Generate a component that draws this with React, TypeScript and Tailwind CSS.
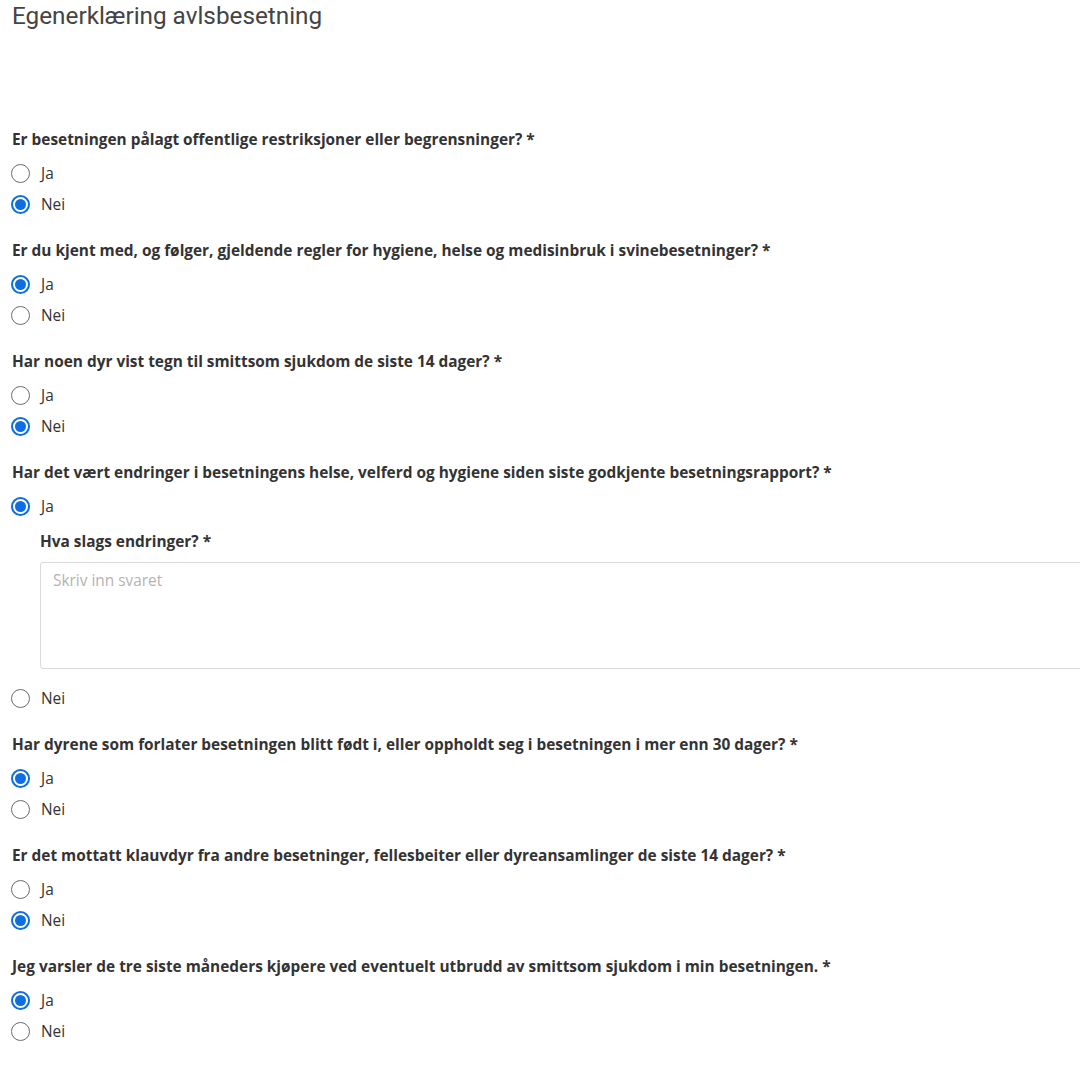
import React from "react";

type Q = { label: string; value: "Ja" | "Nei"; sub?: boolean };

const questions: Q[] = [
  { label: "Er besetningen pålagt offentlige restriksjoner eller begrensninger? *", value: "Nei" },
  { label: "Er du kjent med, og følger, gjeldende regler for hygiene, helse og medisinbruk i svinebesetninger? *", value: "Ja" },
  { label: "Har noen dyr vist tegn til smittsom sjukdom de siste 14 dager? *", value: "Nei" },
  { label: "Har det vært endringer i besetningens helse, velferd og hygiene siden siste godkjente besetningsrapport? *", value: "Ja", sub: true },
  { label: "Har dyrene som forlater besetningen blitt født i, eller oppholdt seg i besetningen i mer enn 30 dager? *", value: "Ja" },
  { label: "Er det mottatt klauvdyr fra andre besetninger, fellesbeiter eller dyreansamlinger de siste 14 dager? *", value: "Nei" },
  { label: "Jeg varsler de tre siste måneders kjøpere ved eventuelt utbrudd av smittsom sjukdom i min besetningen. *", value: "Ja" },
];

function Radio({ checked, label }: { checked: boolean; label: string }) {
  return (
    <div className="flex items-center h-[31px]">
      <span
        className={
          checked
            ? "w-[19px] h-[19px] rounded-full border-2 border-[#0b6fe3] bg-white flex items-center justify-center ml-[11px]"
            : "w-[19px] h-[19px] rounded-full border border-[#6b6b6b] bg-white ml-[11px]"
        }
      >
        {checked && <span className="w-[11px] h-[11px] rounded-full bg-[#0b6fe3]" />}
      </span>
      <span className="ml-[11px] text-[15.4px] text-[#333]">{label}</span>
    </div>
  );
}

export default function App() {
  return (
    <div className="w-[1080px] h-[1065px] overflow-hidden bg-white font-['Open_Sans',sans-serif] text-[#333]">
      <h1 className="font-['Roboto',sans-serif] text-[24.3px] text-[#444] leading-[24px] h-[24px] pl-[12px] pt-[4px] box-content">
        Egenerklæring avlsbesetning
      </h1>
      <div className="pt-[102px] flex flex-col gap-[21px]">
        {questions.map((q, i) => (
          <div key={i} className="flex flex-col">
            <div className="pl-[12px] text-[15.4px] font-bold h-[20px] leading-[20px] mb-[8px] whitespace-nowrap">{q.label}</div>
            <Radio checked={q.value === "Ja"} label="Ja" />
            {q.sub && (
              <div className="pl-[40px] pt-[10px] pb-[14px]">
                <div className="text-[15.4px] font-bold leading-[20px] h-[20px] mb-[10px]">Hva slags endringer? *</div>
                <div className="w-[1100px] h-[107px] border border-[#d9d9d9] rounded-[3px] px-[12px] py-[8px] text-[15.4px] leading-[20px] text-[#b3b3b3]">
                  Skriv inn svaret
                </div>
              </div>
            )}
            <Radio checked={q.value === "Nei"} label="Nei" />
          </div>
        ))}
      </div>
    </div>
  );
}
